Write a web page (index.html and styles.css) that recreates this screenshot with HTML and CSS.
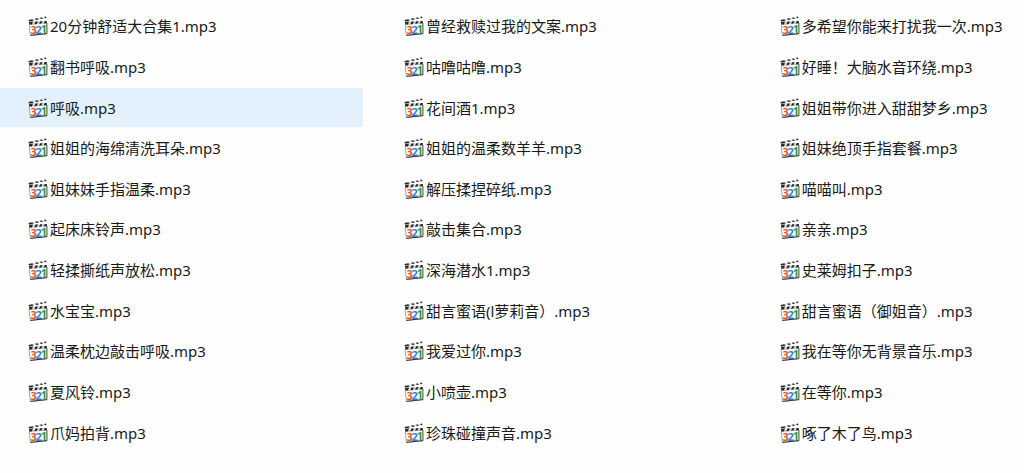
FILE: index.html
```html
<!DOCTYPE html>
<html lang="zh-CN">
<head>
    <meta charset="UTF-8">
    <meta name="viewport" content="width=device-width, initial-scale=1.0">
    <title>mp3</title>
    <link rel="stylesheet" href="styles.css">
</head>
<body>

    <ul class="file-list" id="fileList"></ul>

    <!-- clapperboard icon, cloned into every row -->
    <template id="fileIcon">
        <svg class="icon" viewBox="0 0 20 20" aria-hidden="true">
            <path d="M1.2 8.4 18.8 7 19 17.6 2.4 19.4z" fill="#fff" stroke="#8b8f94" stroke-width=".8"/>
            <path d="M2.4 19.4 19 17.6" stroke="#333" stroke-width="1"/>
            <path d="M18.9 7v10.6" stroke="#555" stroke-width=".8"/>
            <path d="M.4 4 18 .6 18.3 2 1 5.6z" fill="#e2e3e5"/>
            <path d="M.4 4 4.4 3.2 5.8 4.6 1 5.6zM7 2.7 9.4 2.2 10.8 3.6 8.3 4.1zM11.8 1.8 13.8 1.4 15 2.7 12.9 3.1zM16 1 18 .6 18.3 2 17 2.3z" fill="#2a2a2a"/>
            <path d="M1 5.7 18.8 5 18.9 7.2 1.3 8.6z" fill="#d8dadc"/>
            <path d="M1 5.7 5 5.5 4 8.4 1.3 8.6zM7.4 5.5 10 5.4 8.8 8 6.4 8.2zM12.2 5.3 14.6 5.2 13.4 7.6 11 7.8zM16.7 5.1 18.8 5 18.9 7.2 15.7 7.4z" fill="#2a2a2a"/>
            <g class="icon-count">
                <text x="2.4" y="18" fill="#e0561c">3</text>
                <text x="7.6" y="17.6" fill="#2f7fd6">2</text>
                <text x="12.8" y="17.2" fill="#2c9c33">1</text>
            </g>
        </svg>
    </template>

    <script>
        const files = [
            "20分钟舒适大合集1.mp3",
            "翻书呼吸.mp3",
            "呼吸.mp3",
            "姐姐的海绵清洗耳朵.mp3",
            "姐妹妹手指温柔.mp3",
            "起床床铃声.mp3",
            "轻揉撕纸声放松.mp3",
            "水宝宝.mp3",
            "温柔枕边敲击呼吸.mp3",
            "夏风铃.mp3",
            "爪妈拍背.mp3",
            "曾经救赎过我的文案.mp3",
            "咕噜咕噜.mp3",
            "花间酒1.mp3",
            "姐姐的温柔数羊羊.mp3",
            "解压揉捏碎纸.mp3",
            "敲击集合.mp3",
            "深海潜水1.mp3",
            "甜言蜜语(l萝莉音）.mp3",
            "我爱过你.mp3",
            "小喷壶.mp3",
            "珍珠碰撞声音.mp3",
            "多希望你能来打扰我一次.mp3",
            "好睡！大脑水音环绕.mp3",
            "姐姐带你进入甜甜梦乡.mp3",
            "姐妹绝顶手指套餐.mp3",
            "喵喵叫.mp3",
            "亲亲.mp3",
            "史莱姆扣子.mp3",
            "甜言蜜语（御姐音）.mp3",
            "我在等你无背景音乐.mp3",
            "在等你.mp3",
            "啄了木了鸟.mp3"
        ];
        const selected = "呼吸.mp3";

        const list = document.getElementById("fileList");
        const icon = document.getElementById("fileIcon");

        files.forEach(name => {
            const item = document.createElement("li");
            item.className = name === selected ? "file selected" : "file";
            item.appendChild(icon.content.cloneNode(true));

            const label = document.createElement("span");
            label.textContent = name;
            item.appendChild(label);
            list.appendChild(item);
        });
    </script>

</body>
</html>
```
FILE: styles.css
```css
* {
    box-sizing: border-box;
}
body {
    margin: 0;
    font-family: "Noto Sans", "Noto Sans CJK SC", sans-serif;
    font-size: 15px;
    line-height: 20px;
    color: #1a1a1a;
    background-color: #fefefe;
}
.file-list {
    display: grid;
    grid-auto-flow: column;
    grid-template-columns: 4fr 4fr 3fr;
    grid-template-rows: repeat(11, 1fr);
    gap: 2px 13px;
    min-height: 100vh;
    margin: 0;
    padding: 7px 0 21px;
    list-style: none;
}
.file {
    display: flex;
    align-items: center;
    gap: 2px;
    padding-left: 28px;
    white-space: nowrap;
}
.file.selected {
    background-color: #e3f1fd;
}
.icon {
    flex: none;
    width: 20px;
    height: 20px;
}
.icon-count {
    font-family: "Liberation Sans Narrow", "Open Sans", sans-serif;
    font-size: 11px;
    font-weight: 700;
}
```
